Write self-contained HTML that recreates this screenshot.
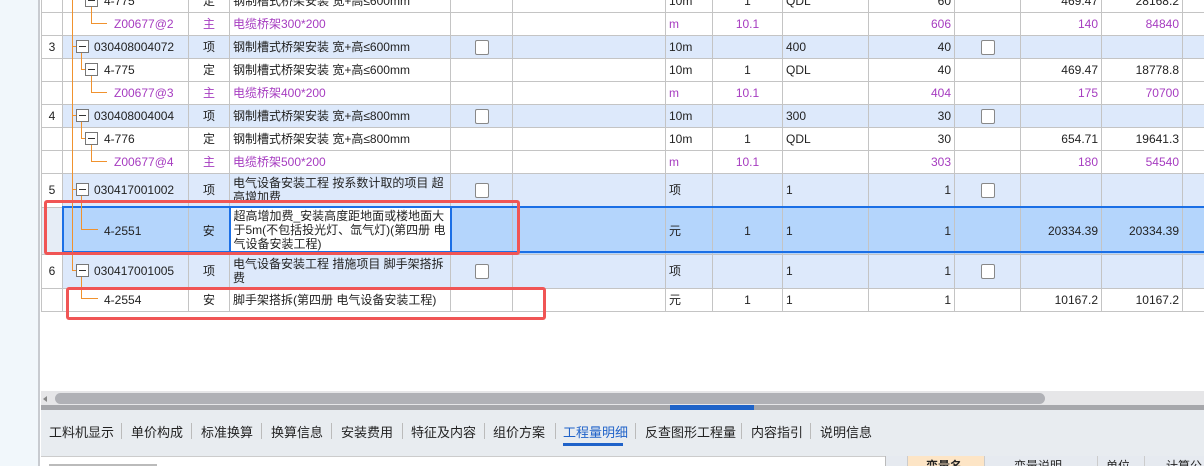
<!DOCTYPE html>
<html><head><meta charset="utf-8"><style>
*{margin:0;padding:0;box-sizing:border-box}
body{width:1204px;height:466px;overflow:hidden;background:#fff;position:relative;font-family:"Liberation Sans","Noto Sans CJK SC",sans-serif;font-size:12px;color:#222}
#left{position:absolute;left:0;top:0;width:40px;height:466px;background:#f1f7fb;border-right:2px solid #c8cbd0}
table{position:absolute;left:41px;top:-11px;border-collapse:collapse;table-layout:fixed;width:1181px}
td{border:1px solid #c4c4c4;height:23px;padding:0 3px;white-space:nowrap;overflow:hidden;line-height:14px;vertical-align:middle}
tr.b td{background:#dde9fb}
tr.b td.n{background:#fff}
tr.p td{color:#a63cc0}
tr.s td{background:#b4d5fc}
td.r{text-align:right}td.c{text-align:center}
td.w{white-space:normal;line-height:14px;vertical-align:top;padding-top:2px}
.cb{display:inline-block;width:14px;height:15px;border:1px solid #888;border-radius:2px;background:#fff;vertical-align:middle}
.t{position:absolute;background:#f0922e}
.bx{position:absolute;width:13px;height:13px;border:1px solid #777;background:#fff}
.bx:after{content:"";position:absolute;left:2px;right:2px;top:5px;height:1px;background:#333}
.red{position:absolute;border:3px solid #f05555;border-radius:3px}
</style></head><body>
<div id="left"></div>
<table>
<colgroup><col style="width:21px"><col style="width:126px"><col style="width:41px"><col style="width:221px"><col style="width:62px"><col style="width:153px"><col style="width:47px"><col style="width:70px"><col style="width:86px"><col style="width:86px"><col style="width:66px"><col style="width:81px"><col style="width:81px"><col style="width:40px"></colgroup>
<tr><td class="n"></td><td style="padding-left:41px">4-775</td><td class="c">定</td><td>钢制槽式桥架安装 宽+高≤600mm</td><td></td><td></td><td>10m</td><td class="c">1</td><td>QDL</td><td class="r">60</td><td></td><td class="r">469.47</td><td class="r">28168.2</td><td></td></tr>
<tr class="p"><td class="n"></td><td style="padding-left:51px">Z00677@2</td><td class="c">主</td><td>电缆桥架300*200</td><td></td><td></td><td>m</td><td class="c">10.1</td><td></td><td class="r">606</td><td></td><td class="r">140</td><td class="r">84840</td><td></td></tr>
<tr class="b"><td class="n c">3</td><td style="padding-left:31px">030408004072</td><td class="c">项</td><td>钢制槽式桥架安装 宽+高≤600mm</td><td class="c"><span class="cb"></span></td><td></td><td>10m</td><td></td><td>400</td><td class="r">40</td><td class="c"><span class="cb"></span></td><td></td><td></td><td></td></tr>
<tr><td class="n"></td><td style="padding-left:41px">4-775</td><td class="c">定</td><td>钢制槽式桥架安装 宽+高≤600mm</td><td></td><td></td><td>10m</td><td class="c">1</td><td>QDL</td><td class="r">40</td><td></td><td class="r">469.47</td><td class="r">18778.8</td><td></td></tr>
<tr class="p"><td class="n"></td><td style="padding-left:51px">Z00677@3</td><td class="c">主</td><td>电缆桥架400*200</td><td></td><td></td><td>m</td><td class="c">10.1</td><td></td><td class="r">404</td><td></td><td class="r">175</td><td class="r">70700</td><td></td></tr>
<tr class="b"><td class="n c">4</td><td style="padding-left:31px">030408004004</td><td class="c">项</td><td>钢制槽式桥架安装 宽+高≤800mm</td><td class="c"><span class="cb"></span></td><td></td><td>10m</td><td></td><td>300</td><td class="r">30</td><td class="c"><span class="cb"></span></td><td></td><td></td><td></td></tr>
<tr><td class="n"></td><td style="padding-left:41px">4-776</td><td class="c">定</td><td>钢制槽式桥架安装 宽+高≤800mm</td><td></td><td></td><td>10m</td><td class="c">1</td><td>QDL</td><td class="r">30</td><td></td><td class="r">654.71</td><td class="r">19641.3</td><td></td></tr>
<tr class="p"><td class="n"></td><td style="padding-left:51px">Z00677@4</td><td class="c">主</td><td>电缆桥架500*200</td><td></td><td></td><td>m</td><td class="c">10.1</td><td></td><td class="r">303</td><td></td><td class="r">180</td><td class="r">54540</td><td></td></tr>
<tr class="b" style="height:33px"><td class="n c">5</td><td style="padding-left:31px">030417001002</td><td class="c">项</td><td class="w" style="height:33px"><div style="height:30px;overflow:hidden">电气设备安装工程 按系数计取的项目 超高增加费</div></td><td class="c"><span class="cb"></span></td><td></td><td>项</td><td></td><td>1</td><td class="r">1</td><td class="c"><span class="cb"></span></td><td></td><td></td><td></td></tr>
<tr class="s" style="height:47px"><td class="n" style="background:#e6edf6"></td><td style="padding-left:41px">4-2551</td><td class="c">安</td><td class="w" style="background:#fff;border:2px solid #1a6fe6;padding-top:1px">超高增加费_安装高度距地面或楼地面大于5m(不包括投光灯、氙气灯)(第四册 电气设备安装工程)</td><td></td><td></td><td>元</td><td class="c">1</td><td>1</td><td class="r">1</td><td></td><td class="r">20334.39</td><td class="r">20334.39</td><td></td></tr>
<tr class="b" style="height:34px"><td class="n c">6</td><td style="padding-left:31px">030417001005</td><td class="c">项</td><td class="w">电气设备安装工程 措施项目 脚手架搭拆费</td><td class="c"><span class="cb"></span></td><td></td><td>项</td><td></td><td>1</td><td class="r">1</td><td class="c"><span class="cb"></span></td><td></td><td></td><td></td></tr>
<tr style="height:22px"><td class="n"></td><td style="padding-left:41px">4-2554</td><td class="c">安</td><td>脚手架搭拆(第四册 电气设备安装工程)</td><td></td><td></td><td>元</td><td class="c">1</td><td>1</td><td class="r">1</td><td></td><td class="r">10167.2</td><td class="r">10167.2</td><td></td></tr>
</table>
<div style="position:absolute;left:62px;top:206px;width:1150px;height:47px;border:2px solid #1a6fe6;border-right:none;pointer-events:none"></div>
<div class="t" style="left:72px;top:0;width:1px;height:271px"></div>
<div class="t" style="left:72px;top:46px;width:4px;height:1px"></div>
<div class="t" style="left:72px;top:115px;width:4px;height:1px"></div>
<div class="t" style="left:72px;top:189px;width:4px;height:1px"></div>
<div class="t" style="left:72px;top:270px;width:4px;height:1px"></div>
<div class="t" style="left:81px;top:52px;width:1px;height:18px"></div><div class="t" style="left:81px;top:69px;width:4px;height:1px"></div>
<div class="t" style="left:81px;top:121px;width:1px;height:18px"></div><div class="t" style="left:81px;top:138px;width:4px;height:1px"></div>
<div class="t" style="left:81px;top:195px;width:1px;height:35px"></div><div class="t" style="left:81px;top:229px;width:17px;height:1px"></div>
<div class="t" style="left:81px;top:276px;width:1px;height:23px"></div><div class="t" style="left:81px;top:298px;width:17px;height:1px"></div>
<div class="t" style="left:91px;top:6px;width:1px;height:18px"></div><div class="t" style="left:91px;top:23px;width:16px;height:1px"></div>
<div class="t" style="left:91px;top:75px;width:1px;height:18px"></div><div class="t" style="left:91px;top:92px;width:16px;height:1px"></div>
<div class="t" style="left:91px;top:144px;width:1px;height:18px"></div><div class="t" style="left:91px;top:161px;width:16px;height:1px"></div>
<div class="bx" style="left:85px;top:-6px"></div>
<div class="bx" style="left:76px;top:40px"></div>
<div class="bx" style="left:85px;top:63px"></div>
<div class="bx" style="left:76px;top:109px"></div>
<div class="bx" style="left:85px;top:132px"></div>
<div class="bx" style="left:76px;top:183px"></div>
<div class="bx" style="left:76px;top:264px"></div>
<div class="red" style="left:44px;top:200px;width:476px;height:55px"></div>
<div class="red" style="left:66px;top:287px;width:480px;height:33px"></div>
<div style="position:absolute;left:41px;top:391px;width:1163px;height:14px;background:#e6e6e8"></div>
<div style="position:absolute;left:43px;top:396px;height:6px;border-right:4px solid #888;border-top:3px solid transparent;border-bottom:3px solid transparent;width:0"></div>
<div style="position:absolute;left:55px;top:393px;width:990px;height:11px;background:#b0b1b6;border-radius:6px"></div>
<div style="position:absolute;left:41px;top:405px;width:1163px;height:5px;background:#a6a7ab"></div>
<div style="position:absolute;left:670px;top:405px;width:84px;height:5px;background:#1e63c8"></div>
<div style="position:absolute;left:41px;top:410px;width:1163px;height:46px;background:#e8ecf0"></div>
<div style="position:absolute;left:41px;top:422px;font-size:13px;color:#222;white-space:nowrap">
<span style="position:absolute;left:8px">工料机显示</span>
<span style="position:absolute;left:90px">单价构成</span>
<span style="position:absolute;left:160px">标准换算</span>
<span style="position:absolute;left:230px">换算信息</span>
<span style="position:absolute;left:300px">安装费用</span>
<span style="position:absolute;left:370px">特征及内容</span>
<span style="position:absolute;left:452px">组价方案</span>
<span style="position:absolute;left:522px;color:#1f62c9">工程量明细</span>
<span style="position:absolute;left:604px">反查图形工程量</span>
<span style="position:absolute;left:710px">内容指引</span>
<span style="position:absolute;left:779px">说明信息</span>
</div>
<div style="position:absolute;left:563px;top:443px;width:60px;height:3px;background:#1f62c9"></div>
<div style="position:absolute;top:423px;left:121px;width:1px;height:16px;background:#bbb"></div>
<div style="position:absolute;top:423px;left:191px;width:1px;height:16px;background:#bbb"></div>
<div style="position:absolute;top:423px;left:261px;width:1px;height:16px;background:#bbb"></div>
<div style="position:absolute;top:423px;left:331px;width:1px;height:16px;background:#bbb"></div>
<div style="position:absolute;top:423px;left:402px;width:1px;height:16px;background:#bbb"></div>
<div style="position:absolute;top:423px;left:484px;width:1px;height:16px;background:#bbb"></div>
<div style="position:absolute;top:423px;left:555px;width:1px;height:16px;background:#bbb"></div>
<div style="position:absolute;top:423px;left:635px;width:1px;height:16px;background:#bbb"></div>
<div style="position:absolute;top:423px;left:741px;width:1px;height:16px;background:#bbb"></div>
<div style="position:absolute;top:423px;left:810px;width:1px;height:16px;background:#bbb"></div>
<div style="position:absolute;left:41px;top:456px;width:1163px;height:10px;background:#fff;border-top:1px solid #ccc"></div>
<div style="position:absolute;left:49px;top:464px;width:108px;height:2px;background:#bbb"></div>
<div style="position:absolute;left:885px;top:456px;width:319px;height:10px;background:#e6eaf0;border-left:1px solid #bbb;overflow:hidden;font-size:12px;font-weight:bold;white-space:nowrap">
<div style="position:absolute;left:21px;top:0;width:77px;height:10px;background:#fde5c6;border-left:1px solid #ccc"></div>
<span style="position:absolute;left:40px;top:1px">变量名</span>
<span style="position:absolute;left:128px;top:1px;font-weight:normal">变量说明</span>
<span style="position:absolute;left:220px;top:1px;font-weight:normal">单位</span>
<span style="position:absolute;left:280px;top:1px;font-weight:normal">计算公</span>
<div style="position:absolute;left:98px;top:0;width:1px;height:10px;background:#ccc"></div>
<div style="position:absolute;left:211px;top:0;width:1px;height:10px;background:#ccc"></div>
<div style="position:absolute;left:258px;top:0;width:1px;height:10px;background:#ccc"></div>
</div>
</body></html>
